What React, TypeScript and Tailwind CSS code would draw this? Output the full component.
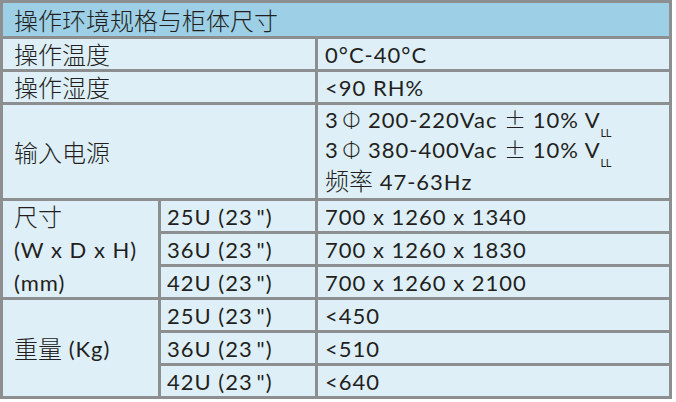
import React from 'react';

const cell = 'bg-[#deeff8] flex items-center';
const zh = "text-[24px] tracking-normal font-['Noto_Sans_CJK_SC',sans-serif] font-light";

function Vll() {
  return (
    <span>
      V<sub className="text-[11px] align-[-6px] tracking-[-0.5px] leading-none">LL</sub>
    </span>
  );
}

function Phase({ range }: { range: string }) {
  return (
    <div>
      3&thinsp;<span className="font-light">Φ</span> {range}Vac{' '}
      <span className="font-['Noto_Sans_CJK_SC',sans-serif] font-light tracking-normal">±</span> 10% <Vll />
    </div>
  );
}

export default function App() {
  return (
    <div className="w-[676px] h-[402px] bg-white text-[#231f20] text-[22px] tracking-[1px] font-['Lato','Noto_Sans_CJK_SC',sans-serif]">
      <div className="w-[672px] grid grid-cols-[155px_154px_351px] grid-rows-[33px_30px_30px_93px_30px_30px_30px_30px_30px_30px] gap-[3px] p-[3px] bg-[#8d8e90]">
        <div className="col-span-3 bg-[#9dd0e6] flex items-center pl-[11px]">
          <span className={zh}>操作环境规格与柜体尺寸</span>
        </div>

        <div className={`${cell} col-span-2 pl-[11px]`}>
          <span className={zh}>操作温度</span>
        </div>
        <div className={`${cell} pl-[7px]`}>0°C-40°C</div>

        <div className={`${cell} col-span-2 pl-[11px]`}>
          <span className={zh}>操作湿度</span>
        </div>
        <div className={`${cell} pl-[7px]`}>&lt;90 RH%</div>

        <div className={`${cell} col-span-2 pl-[11px]`}>
          <span className={zh}>输入电源</span>
        </div>
        <div className="bg-[#deeff8] flex flex-col pl-[7px] leading-[27px]">
          <Phase range="200-220" />
          <Phase range="380-400" />
          <div className="mt-[1px]">
            <span className={zh}>频率</span> 47-63Hz
          </div>
        </div>

        <div className="row-span-3 bg-[#deeff8] flex flex-col gap-[3px] pl-[11px]">
          <div className="h-[30px] flex items-center">
            <span className={zh}>尺寸</span>
          </div>
          <div className="h-[30px] flex items-center">(W x D x H)</div>
          <div className="h-[30px] flex items-center">(mm)</div>
        </div>
        <div className={`${cell} pl-[6px]`}>25U (23&thinsp;")</div>
        <div className={`${cell} pl-[7px]`}>700 x 1260 x 1340</div>
        <div className={`${cell} pl-[6px]`}>36U (23&thinsp;")</div>
        <div className={`${cell} pl-[7px]`}>700 x 1260 x 1830</div>
        <div className={`${cell} pl-[6px]`}>42U (23&thinsp;")</div>
        <div className={`${cell} pl-[7px]`}>700 x 1260 x 2100</div>

        <div className={`${cell} row-span-3 pl-[11px]`}>
          <span className={zh}>重量</span>&nbsp;(Kg)
        </div>
        <div className={`${cell} pl-[6px]`}>25U (23&thinsp;")</div>
        <div className={`${cell} pl-[7px]`}>&lt;450</div>
        <div className={`${cell} pl-[6px]`}>36U (23&thinsp;")</div>
        <div className={`${cell} pl-[7px]`}>&lt;510</div>
        <div className={`${cell} pl-[6px]`}>42U (23&thinsp;")</div>
        <div className={`${cell} pl-[7px]`}>&lt;640</div>
      </div>
    </div>
  );
}
